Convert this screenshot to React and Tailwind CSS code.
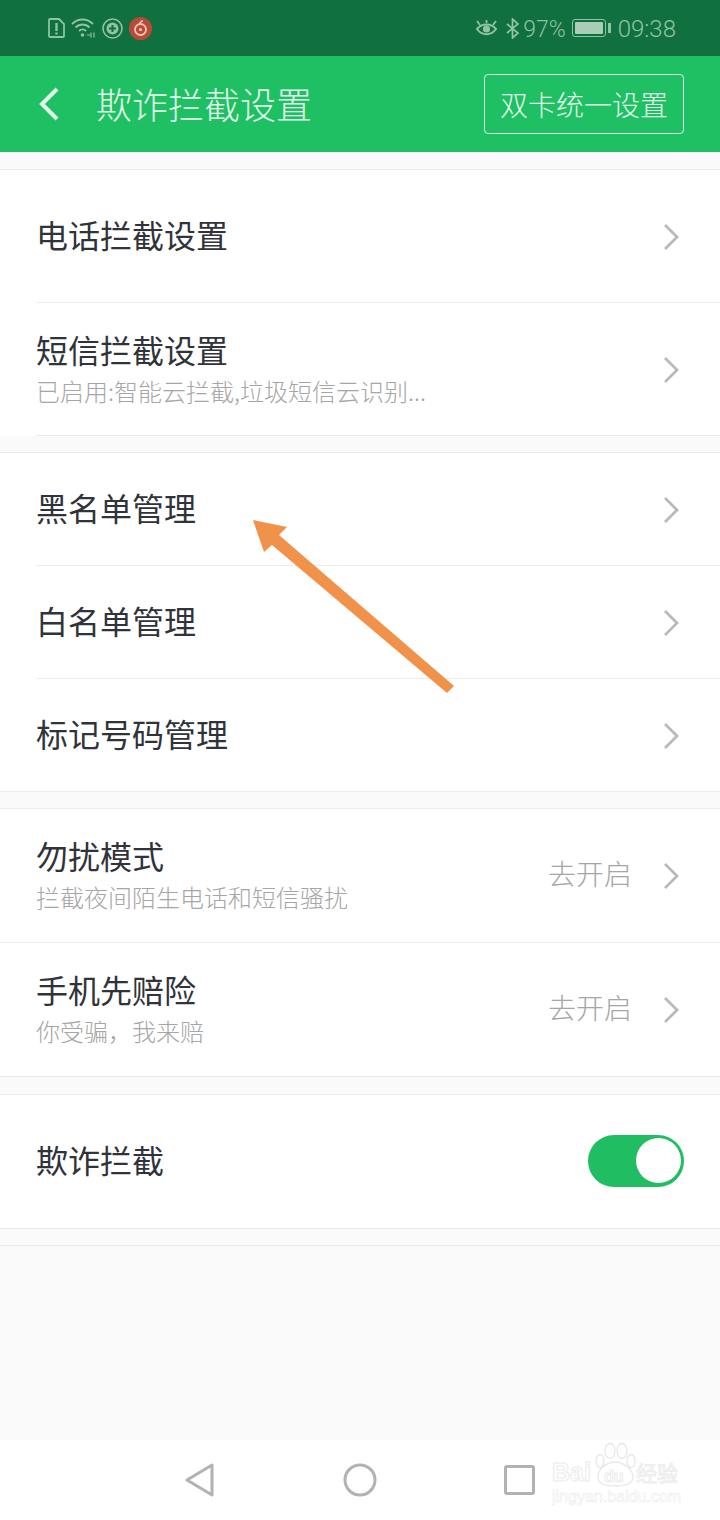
const CJK = 'font-["Noto_Sans_CJK_SC","Noto_Sans",sans-serif]';

function Chevron({ nudge }) {
  return (
    <svg width="18" height="28" viewBox="0 0 18 28" fill="none" stroke="#b9b9b9" strokeWidth="2.8" className={`shrink-0 ${nudge ? 'mt-[2px]' : ''}`}>
      <polyline points="3,2 15,14 3,26" />
    </svg>
  );
}

function Row({ title, sub, action, height, inset, last }) {
  return (
    <div className={`flex flex-col ${inset ? 'pl-9' : ''}`}>
      <div className={`flex items-center pr-10 ${height} ${inset ? '' : 'pl-9'}`}>
        <div className={`flex-1 min-w-0 ${action ? 'pb-[6px]' : 'pb-1'}`}>
          <div className="text-[32px] leading-[44px] font-normal text-[#30333a]">{title}</div>
          {sub && <div className="text-[24px] leading-[32px] font-light text-[#a6a6a6] mt-1">{sub}</div>}
        </div>
        {action && <span className="text-[28px] font-light text-[#a6a6a6] mr-[30px] pb-[6px]">{action}</span>}
        <Chevron nudge={inset} />
      </div>
      {!last && <div className="h-px bg-[#ececec]" />}
    </div>
  );
}

function StatusBar() {
  return (
    <div className="h-14 bg-[#10703f] flex items-center pl-12 pr-11 text-[#8fc3a3]">
      <div className="flex items-center">
        <svg width="17" height="20" viewBox="0 0 17 20" fill="none" stroke="currentColor" strokeWidth="1.8">
          <path d="M2 1h9l5 5v12a1 1 0 0 1-1 1H2a1 1 0 0 1-1-1V2a1 1 0 0 1 1-1z" />
          <path d="M8.5 5v8M8.5 14.5v2" strokeWidth="2.4" />
        </svg>
        <svg width="25" height="20" viewBox="0 0 25 20" fill="none" stroke="currentColor" strokeWidth="1.8" className="ml-[6px]">
          <path d="M1 6c6-6 15-6 21 0M4.5 9.5c4-4 10-4 14 0M8 13c2-2 5-2 7 0" />
          <circle cx="11.5" cy="17" r="1.8" fill="currentColor" stroke="none" />
          <path d="M16 17h3M20 14.5v5M23 14.5v5" strokeWidth="1.2" />
        </svg>
        <svg width="21" height="21" viewBox="0 0 21 21" fill="none" stroke="currentColor" strokeWidth="1.6" className="ml-[6px]">
          <circle cx="10.5" cy="10.5" r="9.5" />
          <circle cx="10.5" cy="10.5" r="6" fill="currentColor" stroke="none" />
          <path d="M10.5 7v7M7 10.5h7" stroke="#10703f" strokeWidth="2" />
        </svg>
        <svg width="23" height="23" viewBox="0 0 23 23" fill="none" className="ml-[6px]">
          <circle cx="11.5" cy="11.5" r="11.5" fill="#b84a38" />
          <circle cx="11.5" cy="12.5" r="5.5" stroke="#f2c4b8" strokeWidth="1.8" />
          <circle cx="11.5" cy="12.5" r="1.6" fill="#f2c4b8" />
          <path d="M11 7c0-2 1-3 3-3" stroke="#f2c4b8" strokeWidth="1.6" />
        </svg>
      </div>
      <div className="ml-auto flex items-center">
        <svg width="23" height="19" viewBox="0 0 23 19" fill="none" stroke="currentColor" strokeWidth="2">
          <path d="M2 10c5-6 14-6 19 0-5 7-14 7-19 0z" />
          <circle cx="11.5" cy="10" r="3.6" fill="currentColor" stroke="none" />
          <path d="M2 2l3 4M21 2l-3 4M11.5 1v3" strokeWidth="1.8" />
        </svg>
        <svg width="14" height="21" viewBox="0 0 14 21" fill="none" stroke="currentColor" strokeWidth="1.7" className="ml-2">
          <path d="M1 6l11 9-5.5 5V1L12 6 1 15" />
        </svg>
        <span className="ml-[3px] text-[23px] leading-none font-['Roboto',sans-serif] font-light pt-[2px]">97%</span>
        <div className="ml-[6px] w-[34px] h-[18px] rounded-[3px] border-[1.5px] border-[#8fc3a3] p-[2px]">
          <div className="w-full h-full bg-[#a9cdb6] rounded-[1px]" />
        </div>
        <div className="ml-[2px] w-[3px] h-[10px] bg-[#8fc3a3]" />
        <span className="ml-[7px] text-[24px] leading-none font-['Roboto',sans-serif] font-light pt-[2px]">09:38</span>
      </div>
    </div>
  );
}

function Header() {
  return (
    <div className="h-24 bg-[#1fc063] flex items-center pl-[38px] pr-9 text-[#e2f8ea]">
      <svg width="22" height="34" viewBox="0 0 22 34" fill="none" stroke="currentColor" strokeWidth="4">
        <polyline points="19,2 4,17 19,32" />
      </svg>
      <span className="ml-[36px] text-[36px] font-light leading-none pb-[3px]">欺诈拦截设置</span>
      <div className="ml-auto w-[200px] h-[60px] border border-[#d5f3e0] rounded-[4px] flex items-center justify-center text-[28px] font-light">
        双卡统一设置
      </div>
    </div>
  );
}

function Toggle() {
  return (
    <div className="w-24 h-[52px] rounded-full bg-[#21bd63] flex items-center justify-end pr-[3px]">
      <div className="w-[45px] h-[45px] rounded-full bg-white" />
    </div>
  );
}

function NavBar() {
  return (
    <div className="h-20 bg-white flex items-center justify-center pb-[1px] text-[#b2b2b2]">
      <svg width="30" height="34" viewBox="0 0 30 34" fill="none" stroke="currentColor" strokeWidth="3" strokeLinejoin="round" className="ml-[-1px]">
        <path d="M2 17L27 2v30z" />
      </svg>
      <svg width="34" height="34" viewBox="0 0 34 34" fill="none" stroke="currentColor" strokeWidth="3" className="ml-[128px]">
        <circle cx="17" cy="17" r="15" />
      </svg>
      <div className="ml-[127px] mr-[-1px] w-[31px] h-[30px] border-[3px] border-[#b2b2b2] rounded-[3px]" />
    </div>
  );
}

export default function App() {
  return (
    <div className={`relative w-[720px] h-[1520px] overflow-hidden bg-[#fafafa] flex flex-col ${CJK}`}>
      <StatusBar />
      <Header />

      <div className="flex-1 flex flex-col gap-4 pt-[17px]">
        <div className="bg-white border-t border-[#ebebeb]">
          <Row title="电话拦截设置" height="h-[132px]" inset />
          <Row title="短信拦截设置" sub="已启用:智能云拦截,垃圾短信云识别..." height="h-[132px]" inset />
        </div>
        <div className="bg-white border-y border-[#ebebeb]">
          <Row title="黑名单管理" height="h-[112px]" inset />
          <Row title="白名单管理" height="h-[112px]" inset />
          <Row title="标记号码管理" height="h-[112px]" inset last />
        </div>
        <div className="bg-white border-y border-[#ebebeb]">
          <Row title="勿扰模式" sub="拦截夜间陌生电话和短信骚扰" action="去开启" height="h-[133px]" />
          <Row title="手机先赔险" sub={'你受骗\uFF0C我来赔'} action="去开启" height="h-[133px]" last />
        </div>
        <div className="bg-white border-y border-[#ebebeb] h-[135px] flex items-center pl-9 pr-9 pb-[2px] mt-[1px]">
          <span className="flex-1 text-[32px] font-normal text-[#30333a] pb-1">欺诈拦截</span>
          <Toggle />
        </div>
        <div className="h-px bg-[#ebebeb]" />
      </div>

      <NavBar />

      {/* arrow drawn on top of the screenshot */}
      <svg className="absolute left-0 top-0 pointer-events-none" width="720" height="1520" viewBox="0 0 720 1520">
        <polygon points="253,520 287,527 279,535 454,686 447,693 272,545 264,552" fill="#f0924a" />
      </svg>

      {/* baidu watermark */}
      <div className="absolute left-[552px] top-[1442px] w-[130px] h-[64px] text-white pointer-events-none [-webkit-text-stroke:1px_#ececec]">
        <svg className="absolute left-[42px] top-0" width="44" height="46" viewBox="0 0 44 46" fill="#fff" stroke="#e8e8e8" strokeWidth="1.3">
          <ellipse cx="16" cy="9" rx="5" ry="7.5" />
          <ellipse cx="28" cy="9" rx="5" ry="7.5" />
          <ellipse cx="6" cy="19" rx="4" ry="6.5" />
          <ellipse cx="37" cy="19" rx="4" ry="6.5" />
          <path d="M21 20c-8 0-17 7-17 15 0 6 5 9 17 9s18-3 18-9c0-8-10-15-18-15z" />
        </svg>
        <span className="absolute left-0 top-[18px] text-[25px] leading-none font-['Liberation_Sans',sans-serif] font-bold">Bai</span>
        <span className="absolute left-[52px] top-[27px] text-[16px] leading-none font-['Liberation_Sans',sans-serif] font-bold">du</span>
        <span className="absolute left-[84px] top-[20px] text-[21px] leading-none">经验</span>
        <span className="absolute left-0 top-[47px] text-[16px] leading-none font-['Liberation_Sans',sans-serif] whitespace-nowrap [-webkit-text-stroke:0.6px_#eeeeee]">jingyan.baidu.com</span>
      </div>
    </div>
  );
}
